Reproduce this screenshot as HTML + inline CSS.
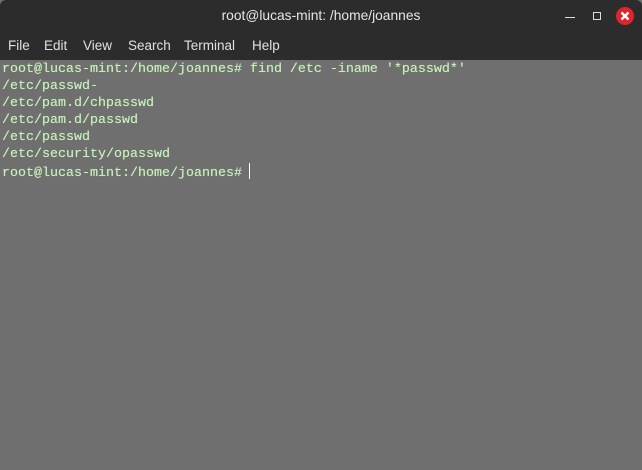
<!DOCTYPE html>
<html><head><style>
html,body{margin:0;padding:0;width:642px;height:470px;overflow:hidden;background:#6f6f6f}
.top{position:absolute;left:0;top:0;width:642px;height:60px;background:#2c2c2c;border-radius:6px 6px 0 0}
.title{position:absolute;top:8px;left:0;width:642px;text-align:center;color:#e6e6e6;font:13.8px "Liberation Sans",sans-serif}
.m{position:absolute;top:38px;color:#e0e0e0;font:13.5px "Liberation Sans",sans-serif}
.term{position:absolute;top:61px;left:2px;font:13.33px/17px "Liberation Mono",monospace;color:#c6f0b8;white-space:pre;text-shadow:0 0 0.4px #c6f0b8}
.cur{display:inline-block;width:1px;height:16px;background:#fff;vertical-align:-3px;margin-left:-1px}
</style></head><body>
<div class="top">
<div class="title">root@lucas-mint: /home/joannes</div>
<div class="m" style="left:8px">File</div>
<div class="m" style="left:44px">Edit</div>
<div class="m" style="left:83px">View</div>
<div class="m" style="left:128px">Search</div>
<div class="m" style="left:184px">Terminal</div>
<div class="m" style="left:252px">Help</div>
<div style="position:absolute;left:565px;top:17px;width:10px;height:1px;background:#ddd"></div>
<div style="position:absolute;left:593px;top:12px;width:6px;height:6px;border:1px solid #ddd"></div>
<svg style="position:absolute;left:616px;top:7px" width="18" height="18" viewBox="0 0 18 18"><circle cx="9" cy="9" r="9" fill="#e0242b"/><path d="M5.5 5.5L12.5 12.5M12.5 5.5L5.5 12.5" stroke="#fff" stroke-width="2.4"/></svg>
</div>
<div class="term">root@lucas-mint:/home/joannes# find /etc -iname '*passwd*'
/etc/passwd-
/etc/pam.d/chpasswd
/etc/pam.d/passwd
/etc/passwd
/etc/security/opasswd
root@lucas-mint:/home/joannes# <span class="cur"></span></div>
</body></html>
